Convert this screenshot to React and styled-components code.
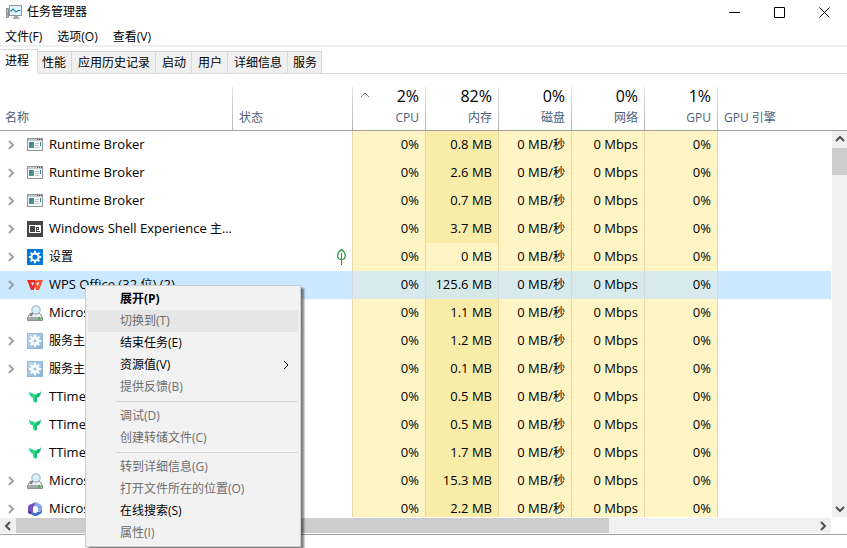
import React from "react";
import styled, { createGlobalStyle, css } from "styled-components";

const GlobalStyle = createGlobalStyle`
  *, *::before, *::after { box-sizing: border-box; }
  body {
    margin: 0;
    background: #fff;
    color: #000;
    font: 12px/20px "Open Sans", "Noto Sans CJK SC", sans-serif;
  }
  button {
    margin: 0;
    padding: 0;
    border: 0;
    background: none;
    color: inherit;
    font: inherit;
  }
  svg { display: block; flex: none; }
`;

const Window = styled.div`
  position: relative;
  display: flex;
  flex-direction: column;
  height: 100vh;
  overflow: hidden;
`;

const TitleBar = styled.header`
  display: flex;
  align-items: center;
  height: 24px;
  padding-left: 6px;
`;

const Title = styled.h1`
  flex: 1;
  margin: 0 0 0 5px;
  font-size: 12px;
  line-height: 20px;
  font-weight: 400;
`;

const WindowButton = styled.button`
  display: grid;
  place-items: center;
  width: 45px;
  height: 23px;
`;

const MenuBar = styled.nav`
  display: flex;
  gap: 15px;
  height: 23px;
  padding: 3px 5px 0;
  border-bottom: 2px solid #f0f0f0;
`;

const MenuButton = styled.button`
  height: 18px;
`;

const TabStrip = styled.div`
  display: flex;
  align-items: flex-end;
  height: 27px;
  flex: none;

  &::after {
    content: "";
    flex: 1;
    border-bottom: 1px solid #d9d9d9;
  }
`;

const Tab = styled.button`
  height: 23px;
  padding: 0 5px 0 6px;
  border: 1px solid #d9d9d9;
  border-left: 0;
  background: #f0f0f0;
  white-space: nowrap;

  &:last-child { padding: 0 4px 0 5px; }

  ${(p) =>
    p.$active &&
    css`
      height: 25px;
      padding: 0 8px 2px 5px;
      border-bottom-color: #fff;
      background: #fff;

      & + button { padding-left: 4px; }
    `}
`;

const Content = styled.main`
  display: flex;
  flex: 1;
  min-height: 0;
  margin-top: 11px;
`;

const TableViewport = styled.div`
  flex: 1;
  min-width: 0;
  overflow: hidden;
`;

const Table = styled.table`
  width: 100%;
  table-layout: fixed;
  border-collapse: separate;
  border-spacing: 0;
`;

const Column = styled.col`
  width: ${(p) => p.$width};
`;

const HeaderCell = styled.th`
  height: 46px;
  padding: 0 7px 0 ${(p) => p.$indent || 5}px;
  border-bottom: 1px solid #a0a0a0;
  background: linear-gradient(#e6e6e6, #b4b4b4) right bottom / 1px 43px no-repeat;
  color: #4c607a;
  font-weight: 400;
  text-align: left;
  vertical-align: bottom;
  white-space: nowrap;

  &:last-child { background: none; }
`;

const HeaderLabel = styled.div`
  padding-bottom: 2px;
`;

const MetricHeader = styled.div`
  display: flex;
  justify-content: space-between;
  text-align: right;
`;

const SortMark = styled.span`
  padding: 7px 0 0 2px;
`;

const Total = styled.strong`
  display: block;
  height: 23px;
  color: #000;
  font-size: 16px;
  line-height: 22px;
  font-weight: 400;
`;

const heat = { none: "#fff", low: "#fff4c4", high: "#f9eca8" };
const selectedHeat = { none: "#cce8ff", low: "#d9eaee", high: "#d6e9e8" };

const Cell = styled.td`
  height: 28px;
  padding: 0 6px 2px 0;
  border-right: 1px solid transparent;
  background: ${(p) => (p.$selected ? selectedHeat : heat)[p.$heat || "none"]};
  font-size: 13px;
  text-align: right;
  white-space: nowrap;

  ${(p) =>
    p.$lined &&
    css`
      border-right-color: ${p.$selected ? "#d5dde0" : "#ead6a0"};
    `}

  ${(p) => p.$withIcon && "padding-bottom: 0;"}
`;

const Cjk = styled.span`
  font-size: 12px;
`;

const NameLine = styled.div`
  display: flex;
  align-items: center;
  padding-left: 5px;
`;

const Expander = styled.button`
  display: grid;
  place-items: center;
  flex: none;
  width: 12px;
  height: 16px;
  margin-right: 10px;
  visibility: ${(p) => (p.$shown ? "visible" : "hidden")};
`;

const ProcessName = styled.span`
  padding: 0 0 2px 6px;
`;

const StatusLine = styled.div`
  display: flex;
  justify-content: flex-end;
`;

const VerticalScroll = styled.div`
  display: flex;
  flex-direction: column;
  width: 16px;

  &::before {
    content: "";
    height: 46px;
    flex: none;
    border-bottom: 1px solid #a0a0a0;
  }
`;

const VerticalTrack = styled.div`
  display: flex;
  flex-direction: column;
  flex: 1;
  margin-left: 1px;
  background: #f0f0f0;
`;

const ScrollButton = styled.button`
  display: grid;
  place-items: center;
  width: 16px;
  height: 16px;
  color: #505050;
`;

const VerticalThumb = styled.div`
  height: 27px;
  margin: 1px 0 auto;
  background: #cdcdcd;
`;

const HorizontalScroll = styled.div`
  display: flex;
  align-items: center;
  height: 15px;
  margin: 1px 16px 0 0;
  flex: none;
  background: #f0f0f0;
`;

const HorizontalTrack = styled.div`
  flex: 1;
  height: 15px;
`;

const HorizontalThumb = styled.div`
  width: 74.2%;
  height: 15px;
  background: #cdcdcd;
`;

const BottomStrip = styled.footer`
  height: 14px;
  margin-top: 1px;
  flex: none;
  border-top: 1px solid #a0a0a0;
`;

const ContextMenu = styled.div`
  position: absolute;
  left: 85px;
  top: 285px;
  width: 216px;
  padding: 2px;
  border: 1px solid #ccc;
  background: #f2f2f2;
  box-shadow: 3px 3px 2px rgba(0, 0, 0, 0.5);
`;

const ContextItem = styled.button`
  display: flex;
  align-items: center;
  justify-content: space-between;
  width: 100%;
  height: 22px;
  padding: 0 7px 0 32px;
  color: #000;
  font-weight: ${(p) => (p.$bold ? 700 : 400)};
  background: ${(p) => (p.$hot ? "#e6e6e6" : "none")};

  &:disabled { color: #6d6d6d; }
`;

const ContextSeparator = styled.hr`
  height: 1px;
  margin: 3px 0 3px 28px;
  border: 0;
  background: #d7d7d7;
`;

const Chevron = ({ d, w = 10, h = 10, color = "currentColor", width = 2 }) => (
  <svg width={w} height={h} viewBox={`0 0 ${w} ${h}`} fill="none" stroke={color} strokeWidth={width}>
    <path d={d} />
  </svg>
);

const Gear = ({ color }) => (
  <g fill="none" stroke={color} strokeWidth="2">
    <circle cx="8" cy="8" r="3.600" />
    <path d="M8 1.800v2.200M8 12v2.200M1.800 8H4M12 8h2.200M3.600 3.600l1.600 1.600M10.800 10.800l1.600 1.600M3.600 12.400l1.600-1.600M10.800 5.200l1.600-1.600" />
  </g>
);

const AppLogo = () => (
  <svg width="16" height="16" viewBox="0 0 16 16">
    <path d="M.5 4.500h2v9h-2z" fill="#b8bcc0" stroke="#8c9094" />
    <path d="M1 9.500h1v1H1z" fill="#4aa35a" />
    <path d="M8 12h4v1.500h1.500V15h-7v-1.500H8z" fill="#a4a8ac" />
    <rect x="3.500" y="1.500" width="12" height="10" fill="#e6f3fb" stroke="#90969b" />
    <path d="M4.500 7.500 7 5l3 3 2-1.500h2.500" fill="none" stroke="#2188bf" strokeWidth="1.200" />
  </svg>
);

const BrokerIcon = () => (
  <svg width="16" height="16" viewBox="0 0 16 16">
    <defs>
      <linearGradient id="broker" x2="1" y2="1">
        <stop stopColor="#3975a8" />
        <stop offset="1" stopColor="#55a77f" />
      </linearGradient>
    </defs>
    <rect x=".5" y="1.500" width="15" height="12" fill="#fbfbfb" stroke="#8f9499" />
    <path d="M1 2h14v2H1z" fill="#c4c8cb" />
    <path d="M10 2h1v1h-1zM12 2h1v1h-1zM14 2h1v1h-1z" fill="#50565c" />
    <path d="M2 5h5v6H2z" fill="url(#broker)" />
    <path d="M8 6.500h4M8 8.500h4M8 10.500h4" stroke="#c4c8cc" />
    <path d="M13 5h1v4h-1z" fill="#397fa8" />
  </svg>
);

const ShellIcon = () => (
  <svg width="16" height="16" viewBox="0 0 16 16">
    <path d="M0 0h16v16H0z" fill="#454545" />
    <path d="M2.500 4.500h11v7h-11z" fill="none" stroke="#fff" />
    <path d="M8 5h1v6H8zM9 5h4v1H9zM10 7h1v1h-1zM12 6h1v3h-1zM10 9h3v1h-3z" fill="#fff" />
  </svg>
);

const SettingsIcon = () => (
  <svg width="16" height="16" viewBox="0 0 16 16">
    <path d="M0 0h16v16H0z" fill="#0078d7" />
    <Gear color="#fff" />
  </svg>
);

const WpsIcon = () => (
  <svg width="16" height="16" viewBox="0 0 16 16">
    <path d="M0 3h8.500L7.500 5.500H4L5.500 9 8 4h2L6.800 13H4z" fill="#ea2c25" />
    <path d="M9.500 3H16l-4 10H9.200L7.500 8 8.600 5l2 4.500 1.700-4H8.700z" fill="#f6532f" />
  </svg>
);

const SearchDriveIcon = () => (
  <svg width="16" height="16" viewBox="0 0 16 16">
    <path d="M3 8.500h10l2.500 4v3H.5v-3z" fill="#eceeef" stroke="#8b8f93" />
    <path d="M1 12h14v3H1z" fill="#a4a8ac" />
    <path d="M11 12h2v3h-2z" fill="#52ba3d" />
    <path d="M6 7.500 3.500 11" stroke="#777c80" strokeWidth="2" />
    <circle cx="9" cy="5" r="4.200" fill="#d3ebfa" stroke="#9aa8b2" />
    <path d="M6.500 5c1-2 3-2.500 4.500-1.500" fill="none" stroke="#fff" />
  </svg>
);

const ServiceIcon = () => (
  <svg width="16" height="16" viewBox="0 0 16 16">
    <defs>
      <linearGradient id="service" x2="1" y2="1">
        <stop stopColor="#c0daee" />
        <stop offset="1" stopColor="#86b3d7" />
      </linearGradient>
    </defs>
    <rect x=".5" y=".5" width="15" height="15" fill="url(#service)" stroke="#93b8d6" />
    <Gear color="#f7fcff" />
    <circle cx="8" cy="8" r="3" fill="#f7fcff" />
    <circle cx="8" cy="8" r="1.600" fill="#9cc3e2" />
  </svg>
);

const TTimeIcon = () => (
  <svg width="16" height="16" viewBox="0 0 16 16">
    <path d="M2 2c.5 1.500 2 2 4 2.500S8.500 6 8.500 7.500v6C7 13.500 6 12.500 6 11V8.500C4 8.500 2 6.500 2 2z" fill="#24dc8a" />
    <path d="M14 2c-.5 1.500-1.500 2-3.500 2.500S8 6 8 7.500v6h1c.7-.5 1-1 1-2v-3c2.500 0 4-2.500 4-6.500z" fill="#10c06a" />
  </svg>
);

const OfficeIcon = () => (
  <svg width="16" height="16" viewBox="0 0 16 16">
    <path d="M9 1 3 3.500C1.800 4 1 5 1 6.500v4C1 12 2 13 3.500 13L6 11.500V7c0-1 1-2 2-2.500z" fill="#7250c4" />
    <path d="M9 1c-1.500 0-2 2-1.500 3.500L10.500 6c.5.500.5 1 .5 2v2l4 .5V6c0-1.200-.7-2-1.700-2.500z" fill="#86a8ea" />
    <path d="M15 8.500v2c0 1-.7 2-1.700 2.500L10 14.700c-1 .5-2 .5-3 0L3 13c2 0 3-1.500 3-1.500l2.500.7L11 10.500c2 .5 4-.5 4-2z" fill="#3c6bcb" />
    <path d="M1 7.500c0 2.500 2 4 5 4L3.500 13C2 13 1 12 1 10.500z" fill="#4636a0" />
    <path d="m8.500 5.500 2.500 1.300v3l-2.500 1.400L6 9.800v-3z" fill="#fff" />
  </svg>
);

const LeafIcon = () => (
  <svg width="9" height="16" viewBox="0 0 9 16" fill="none" stroke="#239b3a">
    <path d="M4.500.5C2 2.500.7 4 .7 6.500S2 10.500 4.500 10.500s3.800-1.500 3.800-4S7 2.500 4.500.5z" strokeWidth="1.200" />
    <path d="M4.500 4v12" />
  </svg>
);

const columns = [
  { total: "2%", label: "CPU", sorted: true },
  { total: "82%", label: "内存" },
  { total: "0%", label: "磁盘" },
  { total: "0%", label: "网络" },
  { total: "1%", label: "GPU" },
];

const processes = [
  { name: "Runtime Broker", Icon: BrokerIcon, memory: "0.8 MB", group: true },
  { name: "Runtime Broker", Icon: BrokerIcon, memory: "2.6 MB", group: true },
  { name: "Runtime Broker", Icon: BrokerIcon, memory: "0.7 MB", group: true },
  { name: "Windows Shell Experience ", suffix: "主...", Icon: ShellIcon, memory: "3.7 MB", group: true },
  { suffix: "设置", Icon: SettingsIcon, memory: "0 MB", group: true, leaf: true, idle: true },
  { name: "WPS Office (32 ", suffix: "位", tail: ") (2)", Icon: WpsIcon, memory: "125.6 MB", group: true, selected: true },
  { name: "Microsoft", Icon: SearchDriveIcon, memory: "1.1 MB" },
  { suffix: "服务主机", Icon: ServiceIcon, memory: "1.2 MB", group: true },
  { suffix: "服务主机", Icon: ServiceIcon, memory: "0.1 MB", group: true },
  { name: "TTime", Icon: TTimeIcon, memory: "0.5 MB" },
  { name: "TTime", Icon: TTimeIcon, memory: "0.5 MB" },
  { name: "TTime", Icon: TTimeIcon, memory: "1.7 MB" },
  { name: "Microsoft", Icon: SearchDriveIcon, memory: "15.3 MB", group: true },
  { name: "Microsoft", Icon: OfficeIcon, memory: "2.2 MB", group: true },
];

const menuItems = [
  { label: "展开(P)", bold: true },
  { label: "切换到(T)", disabled: true, hot: true },
  { label: "结束任务(E)" },
  { label: "资源值(V)", submenu: true },
  { label: "提供反馈(B)", disabled: true },
  null,
  { label: "调试(D)", disabled: true },
  { label: "创建转储文件(C)", disabled: true },
  null,
  { label: "转到详细信息(G)", disabled: true },
  { label: "打开文件所在的位置(O)", disabled: true },
  { label: "在线搜索(S)" },
  { label: "属性(I)", disabled: true },
];

const tabs = ["进程", "性能", "应用历史记录", "启动", "用户", "详细信息", "服务"];

function ProcessRow({ process }) {
  const { name, suffix, tail, Icon, memory, group, leaf, idle, selected } = process;
  return (
    <tr aria-selected={!!selected}>
      <Cell $selected={selected} $withIcon>
        <NameLine>
          <Expander $shown={group} aria-label="展开进程">
            <Chevron d="m3 1 4 4-4 4" color="#a0a0a0" />
          </Expander>
          <Icon />
          <ProcessName>
            {name}
            {suffix && <Cjk>{suffix}</Cjk>}
            {tail}
          </ProcessName>
        </NameLine>
      </Cell>
      <Cell $selected={selected} $lined $withIcon>
        <StatusLine>{leaf && <LeafIcon />}</StatusLine>
      </Cell>
      <Cell $selected={selected} $heat="low" $lined>0%</Cell>
      <Cell $selected={selected} $heat={idle ? "low" : "high"} $lined>{memory}</Cell>
      <Cell $selected={selected} $heat="low" $lined>
        0 MB/<Cjk>秒</Cjk>
      </Cell>
      <Cell $selected={selected} $heat="low" $lined>0 Mbps</Cell>
      <Cell $selected={selected} $heat="low" $lined>0%</Cell>
      <Cell $selected={selected} />
    </tr>
  );
}

export default function App() {
  return (
    <Window>
      <GlobalStyle />
      <TitleBar>
        <AppLogo />
        <Title>任务管理器</Title>
        <WindowButton aria-label="最小化">
          <Chevron d="M0 5.500h11" w={11} h={11} width={1} />
        </WindowButton>
        <WindowButton aria-label="最大化">
          <Chevron d="M.5.5h10v10H.5z" w={11} h={11} width={1} />
        </WindowButton>
        <WindowButton aria-label="关闭">
          <Chevron d="m.5.5 10 10m0-10-10 10" w={11} h={11} width={1} />
        </WindowButton>
      </TitleBar>
      <MenuBar>
        <MenuButton>文件(F)</MenuButton>
        <MenuButton>选项(O)</MenuButton>
        <MenuButton>查看(V)</MenuButton>
      </MenuBar>
      <TabStrip role="tablist">
        {tabs.map((tab, i) => (
          <Tab key={tab} role="tab" aria-selected={i === 0} $active={i === 0}>
            {tab}
          </Tab>
        ))}
      </TabStrip>
      <Content>
        <TableViewport>
          <Table>
            <colgroup>
              <Column $width="233px" />
              <Column $width="120px" />
              {columns.map((c) => (
                <Column key={c.label} $width="73px" />
              ))}
              <Column $width="auto" />
            </colgroup>
            <thead>
              <tr>
                <HeaderCell>
                  <HeaderLabel>名称</HeaderLabel>
                </HeaderCell>
                <HeaderCell $indent={6}>
                  <HeaderLabel>状态</HeaderLabel>
                </HeaderCell>
                {columns.map((c) => (
                  <HeaderCell key={c.label}>
                    <MetricHeader>
                      <SortMark>
                        {c.sorted && <Chevron d="m1 5 4-4 4 4" w={10} h={6} color="#66758a" width={1} />}
                      </SortMark>
                      <HeaderLabel>
                        <Total>{c.total}</Total>
                        {c.label}
                      </HeaderLabel>
                    </MetricHeader>
                  </HeaderCell>
                ))}
                <HeaderCell $indent={6}>
                  <HeaderLabel>GPU 引擎</HeaderLabel>
                </HeaderCell>
              </tr>
            </thead>
            <tbody>
              {processes.map((process, i) => (
                <ProcessRow key={i} process={process} />
              ))}
            </tbody>
          </Table>
        </TableViewport>
        <VerticalScroll>
          <VerticalTrack>
            <ScrollButton aria-label="向上滚动">
              <Chevron d="m1 7 4-4 4 4" />
            </ScrollButton>
            <VerticalThumb />
            <ScrollButton aria-label="向下滚动">
              <Chevron d="m1 3 4 4 4-4" />
            </ScrollButton>
          </VerticalTrack>
        </VerticalScroll>
      </Content>
      <HorizontalScroll>
        <ScrollButton aria-label="向左滚动">
          <Chevron d="M7 1 3 5l4 4" />
        </ScrollButton>
        <HorizontalTrack>
          <HorizontalThumb />
        </HorizontalTrack>
        <ScrollButton aria-label="向右滚动">
          <Chevron d="m3 1 4 4-4 4" />
        </ScrollButton>
      </HorizontalScroll>
      <BottomStrip />
      <ContextMenu role="menu">
        {menuItems.map((item, i) =>
          item ? (
            <ContextItem key={item.label} role="menuitem" disabled={item.disabled} $bold={item.bold} $hot={item.hot}>
              {item.label}
              {item.submenu && <Chevron d="m3 1 4 4-4 4" width={1} />}
            </ContextItem>
          ) : (
            <ContextSeparator key={i} />
          )
        )}
      </ContextMenu>
    </Window>
  );
}
